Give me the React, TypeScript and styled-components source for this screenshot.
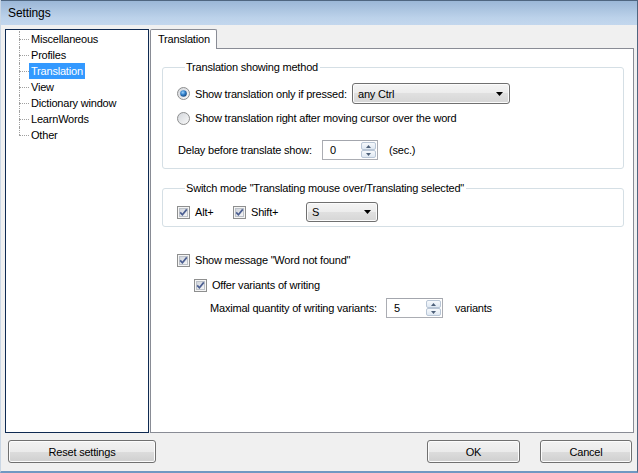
import * as React from "react"
import styled, { createGlobalStyle } from "styled-components"

const GlobalStyle = createGlobalStyle`
    html, body {
        margin: 0;
        padding: 0;
        background: #ffffff;
    }
    body {
        font-family: "Liberation Sans", Arial, sans-serif;
        font-size: 11px;
        letter-spacing: -0.2px;
        color: #000;
    }
`

const Window = styled.div`
    width: 638px;
    height: 473px;
    box-sizing: border-box;
    display: flex;
    flex-direction: column;
    background: #f0f0f0;
    border-left: 1px solid #c9d6e4;
    border-right: 1px solid #4f6680;
    border-bottom: 2px solid #6f98c2;
`

const TitleBar = styled.div`
    height: 25px;
    flex-shrink: 0;
    box-sizing: border-box;
    display: flex;
    align-items: center;
    padding-left: 7px;
    border-top: 1px solid #4f6680;
    background: linear-gradient(#9bb7d7, #bcd2ea 70%, #c3d7ee);
    font-size: 12px;
    letter-spacing: -0.1px;
`

const Body = styled.div`
    flex: 1;
    display: flex;
    flex-direction: column;
    padding: 4px 3px 0 4px;
`

const Main = styled.div`
    display: flex;
    gap: 1px;
    height: 404px;
`

/* ---------- tree ---------- */

const Tree = styled.ul`
    width: 144px;
    box-sizing: border-box;
    margin: 0;
    padding: 1px 0 0 0;
    list-style: none;
    background: #fff;
    border: 1px solid #0f2a52;
`

const TreeItem = styled.li<{ $last?: boolean }>`
    position: relative;
    height: 16px;
    padding-left: 23px;
    display: flex;
    align-items: center;

    &::before {
        content: "";
        position: absolute;
        left: 13px;
        top: 0;
        height: ${p => (p.$last ? "8px" : "16px")};
        border-left: 1px dotted #a0a0a0;
    }
    &::after {
        content: "";
        position: absolute;
        left: 13px;
        top: 8px;
        width: 10px;
        border-top: 1px dotted #a0a0a0;
    }
`

const TreeLabel = styled.span<{ $selected?: boolean }>`
    padding: 0 2px;
    line-height: 16px;
    background: ${p => (p.$selected ? "#3399ff" : "transparent")};
    color: ${p => (p.$selected ? "#fff" : "#000")};
`

/* ---------- tab control ---------- */

const Tabs = styled.div`
    flex: 1;
    display: flex;
    flex-direction: column;
`

const TabStrip = styled.div`
    display: flex;
    height: 19px;
    position: relative;
    z-index: 1;
`

const Tab = styled.div`
    width: 67px;
    box-sizing: border-box;
    height: 20px;
    border: 1px solid #898c95;
    border-bottom: none;
    background: #fff;
    padding: 3px 0 0 7px;
    border-radius: 2px 2px 0 0;
`

const TabPage = styled.div`
    flex: 1;
    background: #fff;
    border: 1px solid #898c95;
    padding: 12px 9px 0 11px;
    display: flex;
    flex-direction: column;
`

/* ---------- group box ---------- */

const Group = styled.fieldset<{ $top?: number }>`
    margin: ${p => p.$top ?? 0}px 0 0 0;
    padding: 0 0 8px 14px;
    border: 1px solid #d5dfe5;
    border-radius: 3px;
    min-inline-size: auto;
`

const Legend = styled.legend`
    margin-left: 8px;
    padding: 0 2px 0 1px;
    line-height: 13px;
`

const Row = styled.div<{ $top?: number; $indent?: number; $h?: number }>`
    display: flex;
    align-items: center;
    height: ${p => p.$h ?? 16}px;
    margin-top: ${p => p.$top ?? 0}px;
    padding-left: ${p => p.$indent ?? 0}px;
`

const Choice = styled.label<{ $w?: number }>`
    display: flex;
    align-items: center;
    gap: 5px;
    ${p => (p.$w ? `width: ${p.$w}px;` : "")}
    flex-shrink: 0;
`

const Text = styled.span<{ $w?: number }>`
    ${p => (p.$w ? `width: ${p.$w}px;` : "")}
    flex-shrink: 0;
`

/* ---------- combo / spin ---------- */

const Combo = styled.div<{ $w: number; $h?: number }>`
    width: ${p => p.$w}px;
    height: ${p => p.$h ?? 21}px;
    box-sizing: border-box;
    border: 1px solid #707070;
    border-radius: 3px;
    background: linear-gradient(#f4f4f4 0%, #ececec 50%, #e0e0e0 50%, #d6d6d6 100%);
    box-shadow: inset 0 0 0 1px #fbfbfb;
    display: flex;
    align-items: center;
    justify-content: space-between;
    padding: 0 6px 0 5px;
`

const Spin = styled.div<{ $w: number }>`
    width: ${p => p.$w}px;
    height: 20px;
    box-sizing: border-box;
    border: 1px solid #abadb3;
    border-top-color: #a3a6ad;
    background: #fff;
    display: flex;
`

const SpinValue = styled.div`
    flex: 1;
    padding-left: 7px;
    line-height: 18px;
`

const SpinButtons = styled.div`
    width: 16px;
    box-sizing: border-box;
    padding: 1px 1px 1px 0;
    display: flex;
    flex-direction: column;
`

const SpinButton = styled.div`
    flex: 1;
    border: 1px solid #b9c6d6;
    border-radius: 2px;
    background: linear-gradient(#f6f9fc, #dfe8f2);
    display: flex;
    align-items: center;
    justify-content: center;
`

/* ---------- footer ---------- */

const Footer = styled.div`
    display: flex;
    align-items: center;
    margin-top: 7px;
    padding-left: 3px;
    padding-right: 2px;
`

const Button = styled.div<{ $w: number; $left?: number }>`
    width: ${p => p.$w}px;
    height: 23px;
    box-sizing: border-box;
    margin-left: ${p => p.$left ?? 0}px;
    border: 1px solid #707070;
    border-radius: 3px;
    background: linear-gradient(#f2f2f2 0%, #ebebeb 50%, #dddddd 50%, #cfcfcf 100%);
    box-shadow: inset 0 0 0 1px #fcfcfc;
    display: flex;
    align-items: center;
    justify-content: center;
`

const Spacer = styled.div`
    flex: 1;
`

/* ---------- drawn widgets ---------- */

const CheckBox = () => (
    <svg width="13" height="13" viewBox="0 0 13 13">
        <defs>
            <linearGradient id="cbFill" x1="0" y1="0" x2="1" y2="1">
                <stop offset="0" stopColor="#cdd2d9" />
                <stop offset="1" stopColor="#f7f7f8" />
            </linearGradient>
        </defs>
        <rect x="0.5" y="0.5" width="12" height="12" fill="#f5f5f5" stroke="#8e8f8f" />
        <rect x="2.5" y="2.5" width="8" height="8" fill="url(#cbFill)" stroke="#bcc1c8" />
        <path d="M3.2 6.4 L5.4 8.8 L9.8 3.4" stroke="#4b5e91" strokeWidth="1.7" fill="none" />
    </svg>
)

const Radio = ({ checked }: { checked?: boolean }) => (
    <svg width="13" height="13" viewBox="0 0 13 13">
        <defs>
            <linearGradient id="rbFill" x1="0" y1="0" x2="1" y2="1">
                <stop offset="0" stopColor="#d2d5da" />
                <stop offset="1" stopColor="#fafafa" />
            </linearGradient>
            <radialGradient id="rbDot" cx="0.4" cy="0.35" r="0.7">
                <stop offset="0" stopColor="#9fd3ff" />
                <stop offset="0.5" stopColor="#2f7fc9" />
                <stop offset="1" stopColor="#17437a" />
            </radialGradient>
        </defs>
        <circle cx="6.5" cy="6.5" r="6" fill="url(#rbFill)" stroke="#8e8f8f" />
        {checked && <circle cx="6.5" cy="6.5" r="3.3" fill="url(#rbDot)" />}
    </svg>
)

const DropArrow = () => (
    <svg width="7" height="4" viewBox="0 0 7 4">
        <path d="M0 0 H7 L3.5 4 Z" fill="#000" />
    </svg>
)

const SpinArrow = ({ down }: { down?: boolean }) => (
    <svg width="5" height="3" viewBox="0 0 5 3">
        <path d={down ? "M0 0 H5 L2.5 3 Z" : "M0 3 H5 L2.5 0 Z"} fill="#4d6079" />
    </svg>
)

const SpinEdit = ({ value, width }: { value: string; width: number }) => (
    <Spin $w={width}>
        <SpinValue>{value}</SpinValue>
        <SpinButtons>
            <SpinButton>
                <SpinArrow />
            </SpinButton>
            <SpinButton>
                <SpinArrow down />
            </SpinButton>
        </SpinButtons>
    </Spin>
)

const sections = ["Miscellaneous", "Profiles", "Translation", "View", "Dictionary window", "LearnWords", "Other"]

export default function App() {
    return (
        <>
            <GlobalStyle />
            <Window>
                <TitleBar>Settings</TitleBar>
                <Body>
                    <Main>
                        <Tree>
                            {sections.map((s, i) => (
                                <TreeItem key={s} $last={i === sections.length - 1}>
                                    <TreeLabel $selected={s === "Translation"}>{s}</TreeLabel>
                                </TreeItem>
                            ))}
                        </Tree>
                        <Tabs>
                            <TabStrip>
                                <Tab>Translation</Tab>
                            </TabStrip>
                            <TabPage>
                                <Group>
                                    <Legend>Translation showing method</Legend>
                                    <Row $top={9} $h={21}>
                                        <Choice $w={175}>
                                            <Radio checked />
                                            Show translation only if pressed:
                                        </Choice>
                                        <Combo $w={158}>
                                            any Ctrl
                                            <DropArrow />
                                        </Combo>
                                    </Row>
                                    <Row $top={6}>
                                        <Choice>
                                            <Radio />
                                            Show translation right after moving cursor over the word
                                        </Choice>
                                    </Row>
                                    <Row $top={14} $h={20} $indent={1}>
                                        <Text $w={144}>Delay before translate show:</Text>
                                        <SpinEdit value="0" width={56} />
                                        <Text style={{ marginLeft: 11 }}>(sec.)</Text>
                                    </Row>
                                </Group>
                                <Group $top={13} style={{ paddingBottom: 4 }}>
                                    <Legend>Switch mode "Translating mouse over/Translating selected"</Legend>
                                    <Row $top={7} $h={20}>
                                        <Choice $w={56}>
                                            <CheckBox />
                                            Alt+
                                        </Choice>
                                        <Choice $w={73}>
                                            <CheckBox />
                                            Shift+
                                        </Choice>
                                        <Combo $w={72} $h={20}>
                                            S
                                            <DropArrow />
                                        </Combo>
                                    </Row>
                                </Group>
                                <Row $top={25} $indent={15}>
                                    <Choice>
                                        <CheckBox />
                                        Show message "Word not found"
                                    </Choice>
                                </Row>
                                <Row $top={9} $indent={32}>
                                    <Choice>
                                        <CheckBox />
                                        Offer variants of writing
                                    </Choice>
                                </Row>
                                <Row $top={5} $h={20} $indent={48}>
                                    <Text $w={176}>Maximal quantity of writing variants:</Text>
                                    <SpinEdit value="5" width={57} />
                                    <Text style={{ marginLeft: 12 }}>variants</Text>
                                </Row>
                            </TabPage>
                        </Tabs>
                    </Main>
                    <Footer>
                        <Button $w={148}>Reset settings</Button>
                        <Spacer />
                        <Button $w={93}>OK</Button>
                        <Button $w={92} $left={20}>
                            Cancel
                        </Button>
                    </Footer>
                </Body>
            </Window>
        </>
    )
}
